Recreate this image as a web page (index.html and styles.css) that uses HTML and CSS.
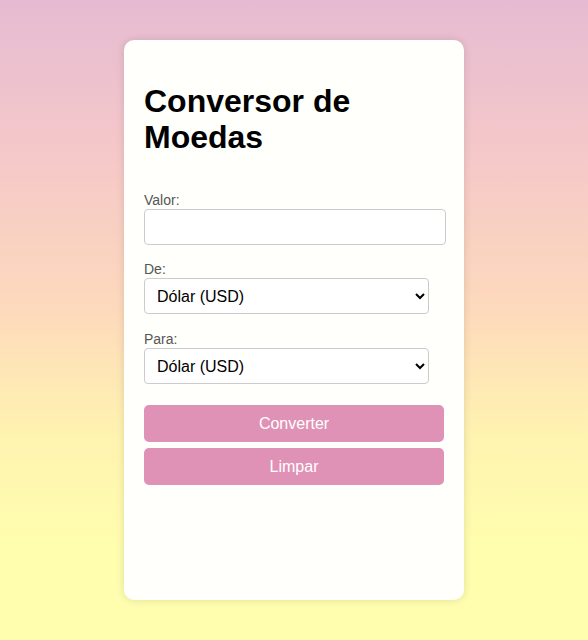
FILE: index.html
```html
<!DOCTYPE html>
<html lang="pt">
<head>
<meta charset="utf-8">
<title>Conversor de Moedas</title>
<link rel="stylesheet" href="styles.css">
</head>
<body>
<main class="card">
  <h1 class="title">Conversor de Moedas</h1>
  <div class="field">
    <label class="label" for="valor">Valor:</label>
    <input class="input" id="valor" type="text">
  </div>
  <div class="field">
    <label class="label" for="de">De:</label>
    <select class="select" id="de">
      <option>Dólar (USD)</option>
      <option>Euro (EUR)</option>
      <option>Real (BRL)</option>
    </select>
  </div>
  <div class="field field-last">
    <label class="label" for="para">Para:</label>
    <select class="select" id="para">
      <option>Dólar (USD)</option>
      <option>Euro (EUR)</option>
      <option>Real (BRL)</option>
    </select>
  </div>
  <div class="actions">
    <button class="btn" type="button">Converter</button>
    <button class="btn" type="button">Limpar</button>
  </div>
</main>
</body>
</html>
```
FILE: styles.css
```css
html, body {
  margin: 0;
  padding: 0;
}
body {
  min-height: 640px;
  background: linear-gradient(to bottom, #e6bbd2 0%, #f5c9c8 25%, #fdd9bc 48%, #fff3b0 68%, #fffdae 85%, #fffdae 100%);
  font-family: "Liberation Sans", Arial, sans-serif;
  display: flex;
  justify-content: center;
  padding-top: 40px;
  box-sizing: border-box;
}
.card {
  width: 340px;
  height: 560px;
  box-sizing: border-box;
  background: #fffffc;
  border-radius: 10px;
  box-shadow: 0 0 8px rgba(0, 0, 0, 0.12);
  padding: 20px 20px;
}
.title {
  font-size: 32px;
  font-weight: bold;
  line-height: 36px;
  margin: 23px 0 37px;
  color: #000;
}
.field {
  display: flex;
  flex-direction: column;
  align-items: flex-start;
  margin-bottom: 16px;
}
.field-last {
  padding-top: 1px;
}
.label {
  font-size: 14px;
  color: #555;
  line-height: 16px;
  margin-bottom: 1px;
}
.input {
  width: 302px;
  height: 36px;
  box-sizing: border-box;
  border: 1px solid #ccc;
  border-radius: 4px;
  background: #fff;
  font-size: 16px;
  padding: 0 10px;
  font-family: inherit;
}
.select {
  width: 285px;
  height: 36px;
  box-sizing: border-box;
  border: 1px solid #ccc;
  border-radius: 4px;
  background: #fff;
  font-size: 16px;
  padding: 0 8px;
  font-family: inherit;
  color: #000;
}
.actions {
  display: flex;
  flex-direction: column;
  gap: 6px;
  margin-top: 21px;
}
.btn {
  width: 300px;
  height: 37px;
  border: none;
  border-radius: 5px;
  background: #df92b6;
  color: #fff;
  font-size: 16px;
  font-family: inherit;
  cursor: pointer;
}
```
